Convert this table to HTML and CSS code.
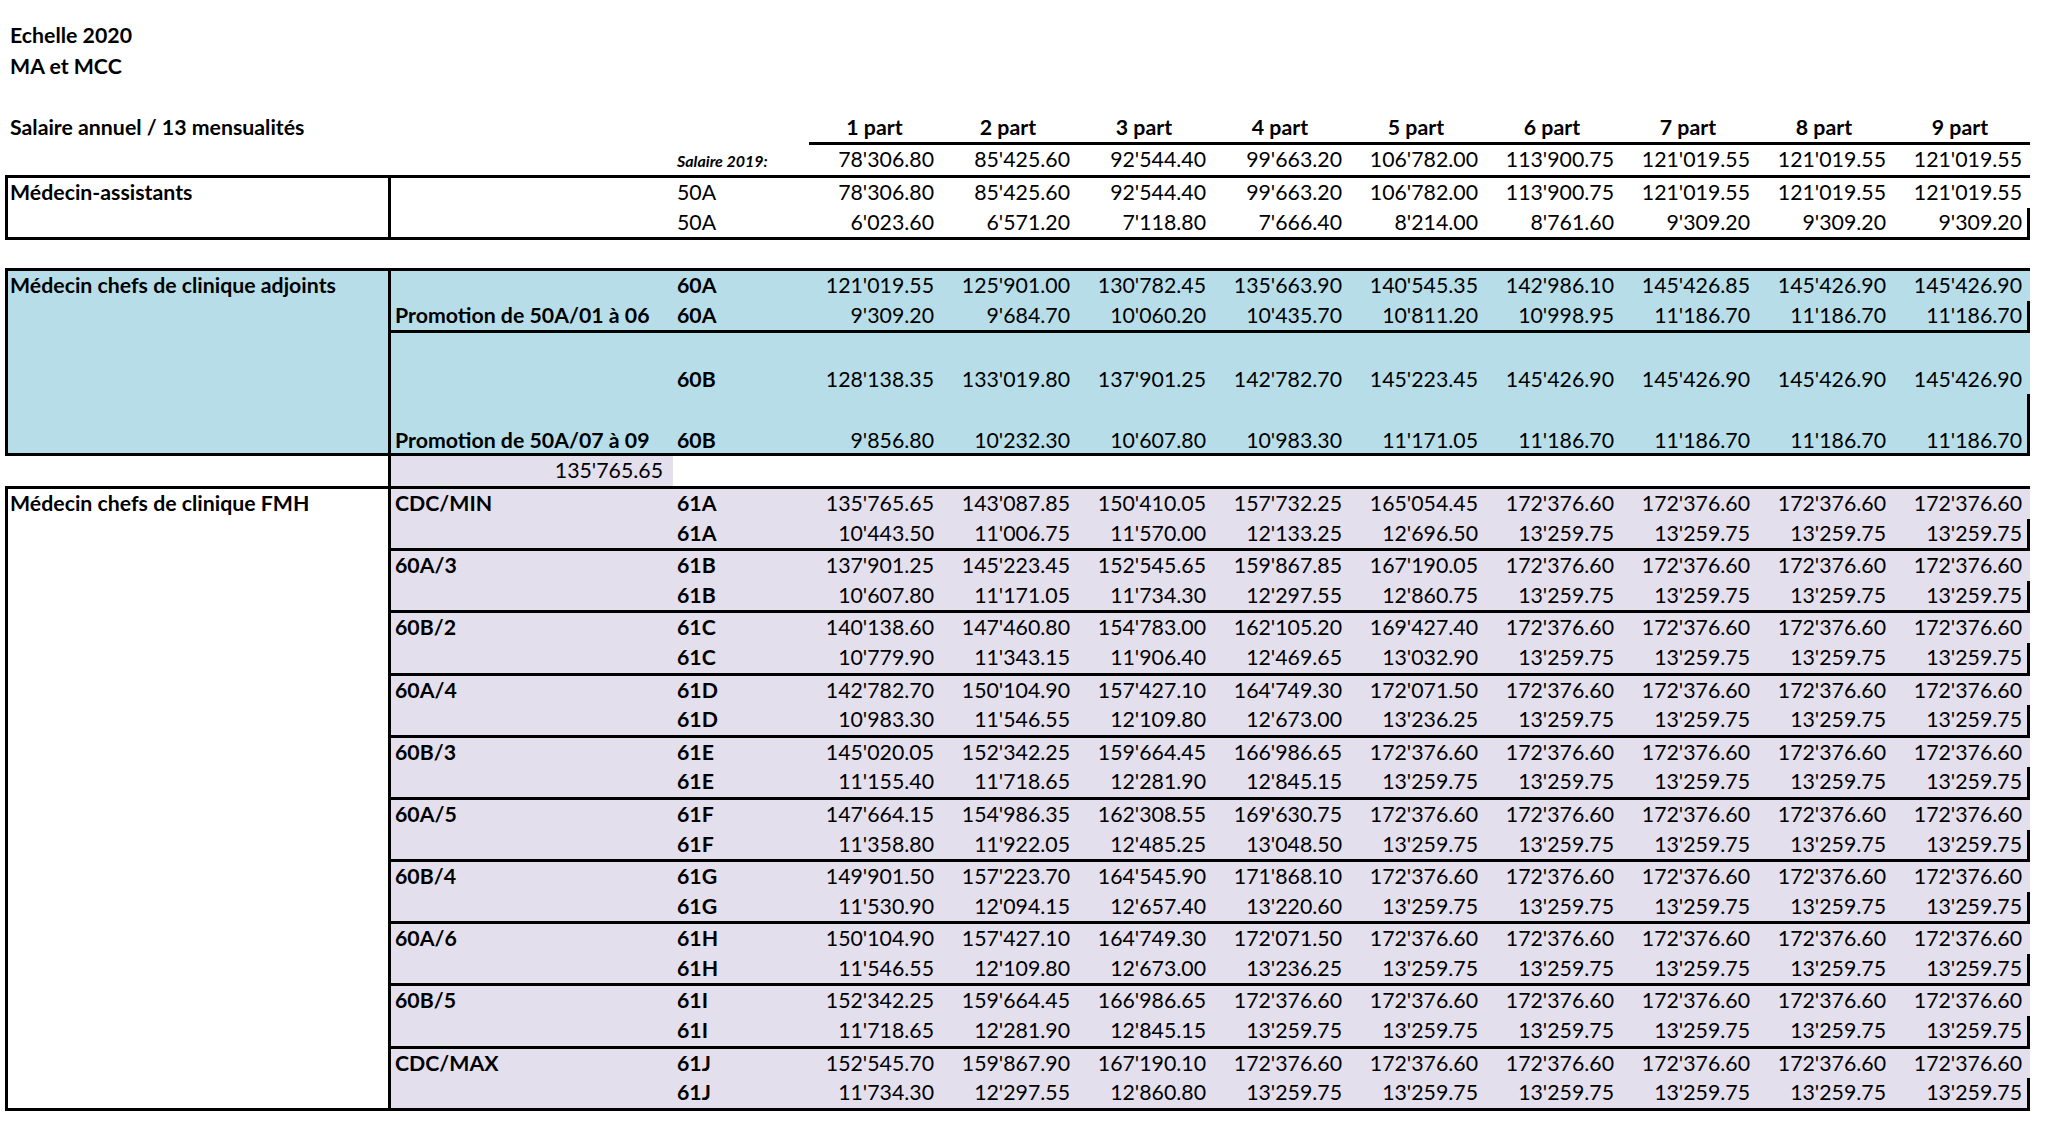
FILE: index.html
```html
<!DOCTYPE html>
<html lang="fr">
<head>
<meta charset="utf-8">
<title>Echelle 2020 - MA et MCC</title>
<link rel="stylesheet" href="styles.css">
</head>
<body>
<div class="sheet">
  <div class="title">Echelle 2020</div>
  <div class="title">MA et MCC</div>
  <div class="blank"></div>
  <div class="hdr">
    <div class="hlbl">Salaire annuel / 13 mensualités</div>
    <div class="parts">
      <span>1 part</span><span>2 part</span><span>3 part</span><span>4 part</span><span>5 part</span><span>6 part</span><span>7 part</span><span>8 part</span><span>9 part</span>
    </div>
  </div>
  <div class="r sal">
    <div class="b"></div><div class="c"><i>Salaire 2019:</i></div>
    <span>78'306.80</span><span>85'425.60</span><span>92'544.40</span><span>99'663.20</span><span>106'782.00</span><span>113'900.75</span><span>121'019.55</span><span>121'019.55</span><span>121'019.55</span>
  </div>

  <div class="block ma">
    <div class="lab">Médecin-assistants</div>
    <div class="groups">
      <div class="g">
        <div class="r"><div class="b"></div><div class="c">50A</div><span>78'306.80</span><span>85'425.60</span><span>92'544.40</span><span>99'663.20</span><span>106'782.00</span><span>113'900.75</span><span>121'019.55</span><span>121'019.55</span><span>121'019.55</span></div>
        <div class="r"><div class="b"></div><div class="c">50A</div><span>6'023.60</span><span>6'571.20</span><span>7'118.80</span><span>7'666.40</span><span>8'214.00</span><span>8'761.60</span><span>9'309.20</span><span>9'309.20</span><span>9'309.20</span></div>
      </div>
    </div>
  </div>

  <div class="gap"></div>

  <div class="block blue">
    <div class="lab">Médecin chefs de clinique adjoints</div>
    <div class="groups">
      <div class="g">
        <div class="r"><div class="b"></div><div class="c k">60A</div><span>121'019.55</span><span>125'901.00</span><span>130'782.45</span><span>135'663.90</span><span>140'545.35</span><span>142'986.10</span><span>145'426.85</span><span>145'426.90</span><span>145'426.90</span></div>
        <div class="r"><div class="b">Promotion de 50A/01 à 06</div><div class="c k">60A</div><span>9'309.20</span><span>9'684.70</span><span>10'060.20</span><span>10'435.70</span><span>10'811.20</span><span>10'998.95</span><span>11'186.70</span><span>11'186.70</span><span>11'186.70</span></div>
      </div>
      <div class="g">
        <div class="r tall1"><div class="b"></div><div class="c k">60B</div><span>128'138.35</span><span>133'019.80</span><span>137'901.25</span><span>142'782.70</span><span>145'223.45</span><span>145'426.90</span><span>145'426.90</span><span>145'426.90</span><span>145'426.90</span></div>
        <div class="r tall2"><div class="b">Promotion de 50A/07 à 09</div><div class="c k">60B</div><span>9'856.80</span><span>10'232.30</span><span>10'607.80</span><span>10'983.30</span><span>11'171.05</span><span>11'186.70</span><span>11'186.70</span><span>11'186.70</span><span>11'186.70</span></div>
      </div>
    </div>
  </div>

  <div class="single">
    <div class="lavcell">135'765.65</div>
  </div>

  <div class="block fmh">
    <div class="lab">Médecin chefs de clinique FMH</div>
    <div class="groups">
      <div class="g">
        <div class="r"><div class="b">CDC/MIN</div><div class="c k">61A</div><span>135'765.65</span><span>143'087.85</span><span>150'410.05</span><span>157'732.25</span><span>165'054.45</span><span>172'376.60</span><span>172'376.60</span><span>172'376.60</span><span>172'376.60</span></div>
        <div class="r"><div class="b"></div><div class="c k">61A</div><span>10'443.50</span><span>11'006.75</span><span>11'570.00</span><span>12'133.25</span><span>12'696.50</span><span>13'259.75</span><span>13'259.75</span><span>13'259.75</span><span>13'259.75</span></div>
      </div>
      <div class="g">
        <div class="r"><div class="b">60A/3</div><div class="c k">61B</div><span>137'901.25</span><span>145'223.45</span><span>152'545.65</span><span>159'867.85</span><span>167'190.05</span><span>172'376.60</span><span>172'376.60</span><span>172'376.60</span><span>172'376.60</span></div>
        <div class="r"><div class="b"></div><div class="c k">61B</div><span>10'607.80</span><span>11'171.05</span><span>11'734.30</span><span>12'297.55</span><span>12'860.75</span><span>13'259.75</span><span>13'259.75</span><span>13'259.75</span><span>13'259.75</span></div>
      </div>
      <div class="g">
        <div class="r"><div class="b">60B/2</div><div class="c k">61C</div><span>140'138.60</span><span>147'460.80</span><span>154'783.00</span><span>162'105.20</span><span>169'427.40</span><span>172'376.60</span><span>172'376.60</span><span>172'376.60</span><span>172'376.60</span></div>
        <div class="r"><div class="b"></div><div class="c k">61C</div><span>10'779.90</span><span>11'343.15</span><span>11'906.40</span><span>12'469.65</span><span>13'032.90</span><span>13'259.75</span><span>13'259.75</span><span>13'259.75</span><span>13'259.75</span></div>
      </div>
      <div class="g">
        <div class="r"><div class="b">60A/4</div><div class="c k">61D</div><span>142'782.70</span><span>150'104.90</span><span>157'427.10</span><span>164'749.30</span><span>172'071.50</span><span>172'376.60</span><span>172'376.60</span><span>172'376.60</span><span>172'376.60</span></div>
        <div class="r"><div class="b"></div><div class="c k">61D</div><span>10'983.30</span><span>11'546.55</span><span>12'109.80</span><span>12'673.00</span><span>13'236.25</span><span>13'259.75</span><span>13'259.75</span><span>13'259.75</span><span>13'259.75</span></div>
      </div>
      <div class="g">
        <div class="r"><div class="b">60B/3</div><div class="c k">61E</div><span>145'020.05</span><span>152'342.25</span><span>159'664.45</span><span>166'986.65</span><span>172'376.60</span><span>172'376.60</span><span>172'376.60</span><span>172'376.60</span><span>172'376.60</span></div>
        <div class="r"><div class="b"></div><div class="c k">61E</div><span>11'155.40</span><span>11'718.65</span><span>12'281.90</span><span>12'845.15</span><span>13'259.75</span><span>13'259.75</span><span>13'259.75</span><span>13'259.75</span><span>13'259.75</span></div>
      </div>
      <div class="g">
        <div class="r"><div class="b">60A/5</div><div class="c k">61F</div><span>147'664.15</span><span>154'986.35</span><span>162'308.55</span><span>169'630.75</span><span>172'376.60</span><span>172'376.60</span><span>172'376.60</span><span>172'376.60</span><span>172'376.60</span></div>
        <div class="r"><div class="b"></div><div class="c k">61F</div><span>11'358.80</span><span>11'922.05</span><span>12'485.25</span><span>13'048.50</span><span>13'259.75</span><span>13'259.75</span><span>13'259.75</span><span>13'259.75</span><span>13'259.75</span></div>
      </div>
      <div class="g">
        <div class="r"><div class="b">60B/4</div><div class="c k">61G</div><span>149'901.50</span><span>157'223.70</span><span>164'545.90</span><span>171'868.10</span><span>172'376.60</span><span>172'376.60</span><span>172'376.60</span><span>172'376.60</span><span>172'376.60</span></div>
        <div class="r"><div class="b"></div><div class="c k">61G</div><span>11'530.90</span><span>12'094.15</span><span>12'657.40</span><span>13'220.60</span><span>13'259.75</span><span>13'259.75</span><span>13'259.75</span><span>13'259.75</span><span>13'259.75</span></div>
      </div>
      <div class="g">
        <div class="r"><div class="b">60A/6</div><div class="c k">61H</div><span>150'104.90</span><span>157'427.10</span><span>164'749.30</span><span>172'071.50</span><span>172'376.60</span><span>172'376.60</span><span>172'376.60</span><span>172'376.60</span><span>172'376.60</span></div>
        <div class="r"><div class="b"></div><div class="c k">61H</div><span>11'546.55</span><span>12'109.80</span><span>12'673.00</span><span>13'236.25</span><span>13'259.75</span><span>13'259.75</span><span>13'259.75</span><span>13'259.75</span><span>13'259.75</span></div>
      </div>
      <div class="g">
        <div class="r"><div class="b">60B/5</div><div class="c k">61I</div><span>152'342.25</span><span>159'664.45</span><span>166'986.65</span><span>172'376.60</span><span>172'376.60</span><span>172'376.60</span><span>172'376.60</span><span>172'376.60</span><span>172'376.60</span></div>
        <div class="r"><div class="b"></div><div class="c k">61I</div><span>11'718.65</span><span>12'281.90</span><span>12'845.15</span><span>13'259.75</span><span>13'259.75</span><span>13'259.75</span><span>13'259.75</span><span>13'259.75</span><span>13'259.75</span></div>
      </div>
      <div class="g">
        <div class="r"><div class="b">CDC/MAX</div><div class="c k">61J</div><span>152'545.70</span><span>159'867.90</span><span>167'190.10</span><span>172'376.60</span><span>172'376.60</span><span>172'376.60</span><span>172'376.60</span><span>172'376.60</span><span>172'376.60</span></div>
        <div class="r"><div class="b"></div><div class="c k">61J</div><span>11'734.30</span><span>12'297.55</span><span>12'860.80</span><span>13'259.75</span><span>13'259.75</span><span>13'259.75</span><span>13'259.75</span><span>13'259.75</span><span>13'259.75</span></div>
      </div>
    </div>
  </div>
</div>
</body>
</html>
```

FILE: styles.css
```css
html, body {
  margin: 0;
  padding: 0;
  background: #ffffff;
}

body {
  font-family: Lato, "Liberation Sans", sans-serif;
  font-size: 21.3px;
  color: #000;
}

.sheet {
  width: 2048px;
  padding-top: 20px;
}

.title {
  height: 31px;
  line-height: 31px;
  padding-left: 10px;
  font-weight: 700;
}

.blank {
  height: 30px;
}

.hdr {
  display: flex;
  height: 33px;
}

.hlbl {
  width: 809px;
  padding-left: 10px;
  box-sizing: border-box;
  line-height: 30px;
  font-weight: 700;
}

.parts {
  display: flex;
  width: 1221px;
  border-bottom: 3px solid #000;
  box-sizing: border-box;
}

.parts span {
  width: 136px;
  line-height: 30px;
  text-align: center;
  font-weight: 700;
}

.parts span:first-child {
  width: 131px;
}

/* generic data row */
.r {
  display: flex;
  align-items: center;
  height: 29.6px;
  line-height: 29.6px;
  white-space: nowrap;
}

.r .b {
  width: 282px;
  flex: none;
  padding-left: 4px;
  box-sizing: border-box;
  font-weight: 700;
}

.r .c {
  width: 131px;
  flex: none;
  padding-left: 4px;
  box-sizing: border-box;
}

.r .c.k {
  font-weight: 700;
}

.r span {
  width: 136px;
  flex: none;
  text-align: right;
  padding-right: 6px;
  box-sizing: border-box;
}

.r span:last-child {
  width: 138px;
  padding-right: 8px;
}

.sal {
  height: 30px;
  padding-left: 391px;
}

.sal i {
  font-size: 16px;
  font-weight: 700;
  font-style: italic;
}

/* bordered blocks */
.block {
  display: flex;
  margin-left: 5px;
  width: 2025px;
  border-top: 3px solid #000;
  border-bottom: 3px solid #000;
  border-left: 3px solid #000;
  box-sizing: border-box;
}

.lab {
  width: 383px;
  flex: none;
  border-right: 3px solid #000;
  box-sizing: border-box;
  padding-left: 2px;
  line-height: 29.6px;
  font-weight: 700;
  white-space: nowrap;
}

.groups {
  width: 1639px;
  flex: none;
}

.g + .g {
  border-top: 3px solid #000;
}

.g .r:last-child {
  box-shadow: inset -3px 0 0 #000;
}

.gap {
  height: 28px;
}

.blue {
  background: #b7dee8;
}

.fmh .groups {
  background: #e4dfec;
}

.tall1 {
  height: 61px;
  align-items: flex-end;
  line-height: 30px;
}

.tall2 {
  height: 59px;
  align-items: flex-end;
  line-height: 26px;
}

/* lone lavender cell */
.single {
  display: flex;
  height: 29.6px;
  padding-left: 388px;
}

.lavcell {
  width: 285px;
  border-left: 3px solid #000;
  box-sizing: border-box;
  background: #e4dfec;
  text-align: right;
  padding-right: 10px;
  line-height: 29.6px;
}
```
